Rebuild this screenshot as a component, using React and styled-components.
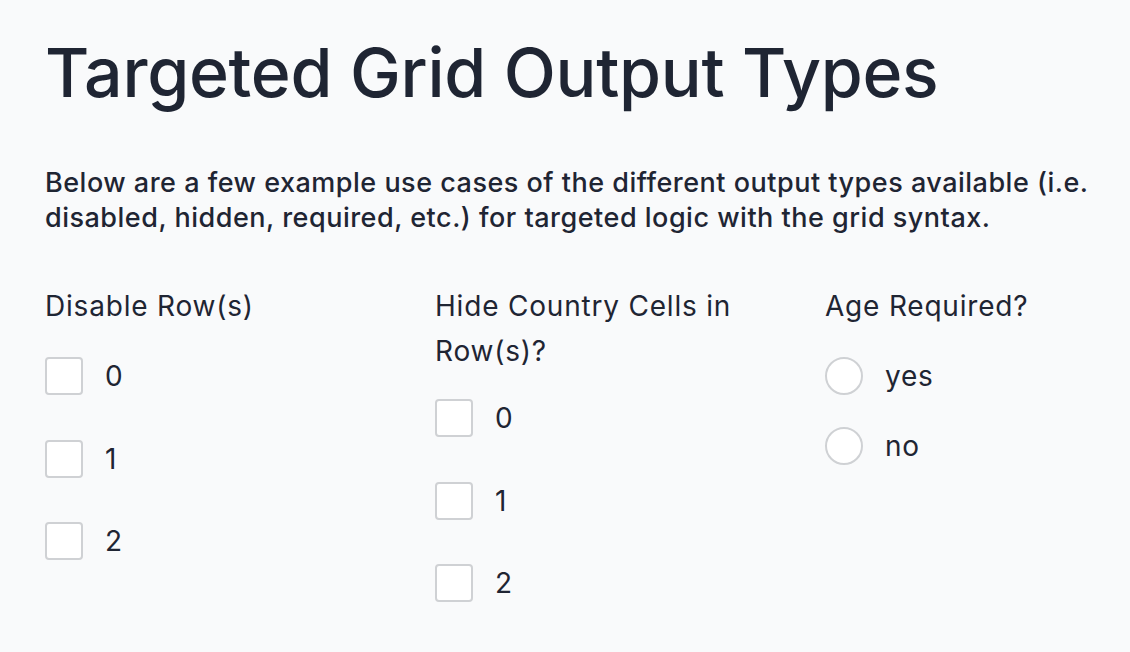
import React from "react";
import styled, { createGlobalStyle } from "styled-components";

const Global = createGlobalStyle`
  html, body { margin: 0; padding: 0; background: #f9fafb; }
  body { font-family: Inter, "Noto Sans", sans-serif; color: #1f2937; }
`;

const Page = styled.main`
  padding: 30px 0 0 45px;
  width: 1100px;
`;

const Title = styled.h1`
  margin: 0;
  font-size: 68px;
  font-weight: 500;
  line-height: 85px;
  letter-spacing: -0.3px;
  color: #1f2533;
`;

const Intro = styled.p`
  margin: 50px 0 0;
  font-size: 27px;
  font-weight: 500;
  line-height: 35px;
  letter-spacing: 0.5px;
  color: #1f2533;
`;

const Columns = styled.div`
  margin-top: 49px;
  display: grid;
  grid-template-columns: repeat(3, 350px);
  column-gap: 40px;
  align-items: start;
`;

const Group = styled.fieldset`
  border: 0;
  margin: 0;
  padding: 0;
  min-width: 0;
`;

const Legend = styled.div`
  font-size: 28px;
  line-height: 45px;
  font-weight: 400;
  letter-spacing: 0.8px;
  color: #1f2533;
  width: 330px;
`;

const Options = styled.div`
  display: flex;
  flex-direction: column;
  margin-top: ${(p) => p.$offset}px;
`;

const Option = styled.label`
  display: flex;
  align-items: center;
  gap: 22px;
  height: ${(p) => p.$h}px;
  font-size: 28px;
  letter-spacing: 0.8px;
  color: #1f2533;
`;

const Box = styled.span`
  width: 38px;
  height: 38px;
  box-sizing: border-box;
  border: 2px solid #cfd1d4;
  border-radius: ${(p) => (p.$round ? "50%" : "4px")};
  background: #ffffff;
  flex: none;
`;

const checkGroups = [
  { title: "Disable Row(s)", options: ["0", "1", "2"], offset: 6 },
  { title: "Hide Country Cells in Row(s)?", options: ["0", "1", "2"], offset: 3 },
];

export default function App() {
  return (
    <>
      <Global />
      <Page>
        <Title>Targeted Grid Output Types</Title>
        <Intro>
          Below are a few example use cases of the different output types available (i.e.
          disabled, hidden, required, etc.) for targeted logic with the grid syntax.
        </Intro>
        <Columns>
          {checkGroups.map((g) => (
            <Group key={g.title}>
              <Legend>{g.title}</Legend>
              <Options $offset={g.offset}>
                {g.options.map((o) => (
                  <Option key={o} $h={82.5}>
                    <Box />
                    {o}
                  </Option>
                ))}
              </Options>
            </Group>
          ))}
          <Group>
            <Legend>Age Required?</Legend>
            <Options $offset={12}>
              {["yes", "no"].map((o) => (
                <Option key={o} $h={70}>
                  <Box $round />
                  {o}
                </Option>
              ))}
            </Options>
          </Group>
        </Columns>
      </Page>
    </>
  );
}
